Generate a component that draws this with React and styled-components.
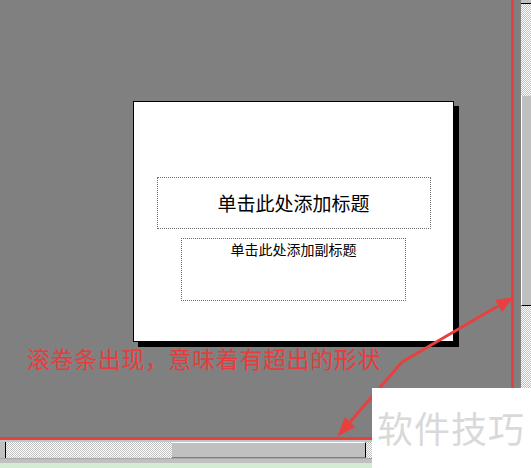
import React from "react";
import styled, { createGlobalStyle } from "styled-components";

const GlobalStyle = createGlobalStyle`
  html, body {
    margin: 0;
    padding: 0;
    overflow: hidden;
    background: #ffffff;
  }
`;

const checker = `
  background-color: #c0c0c0;
  background-image: repeating-conic-gradient(#ffffff 0 25%, #c0c0c0 0 50%);
  background-size: 2px 2px;
`;

const Window = styled.div`
  position: relative;
  width: 531px;
  height: 468px;
  display: flex;
  flex-direction: column;
  background: #c0c0c0;
  overflow: hidden;
  font-family: "Noto Sans CJK SC", "Noto Sans", sans-serif;
`;

const MainRow = styled.div`
  display: flex;
  height: 440px;
`;

const Canvas = styled.div`
  flex: 1;
  background: #808080;
  padding: 101px 0 0 133px;
  box-sizing: border-box;
`;

const Slide = styled.div`
  width: 321px;
  height: 241px;
  box-sizing: border-box;
  background: #ffffff;
  border: 1px solid #000000;
  box-shadow: 5px 5px 0 #000000;
  display: flex;
  flex-direction: column;
  align-items: center;
  padding-top: 75px;
  gap: 9px;
`;

const Placeholder = styled.div`
  box-sizing: border-box;
  width: ${(p) => p.$w}px;
  height: ${(p) => p.$h}px;
  border: 1px dotted #707070;
  display: flex;
  justify-content: center;
  align-items: ${(p) => (p.$top ? "flex-start" : "center")};
  padding-top: ${(p) => (p.$top ? "2px" : "0")};
  color: #000000;
  font-size: ${(p) => p.$size}px;
  line-height: 1.15;
`;

const VScroll = styled.div`
  width: 10px;
  display: flex;
  flex-direction: column;
  border-left: 7px solid #808080;
`;

const VButton = styled.div`
  height: 3px;
  background: #c0c0c0;
  border-bottom: 1px solid #000000;
`;

const Track = styled.div`
  ${checker}
  flex: ${(p) => (p.$size ? `0 0 ${p.$size}px` : "1")};
`;

const VThumb = styled.div`
  height: 209px;
  background: #c0c0c0;
  border-left: 1px solid #ffffff;
  border-bottom: 1px solid #000000;
`;

const HScroll = styled.div`
  display: flex;
  height: 16px;
  border-top: 2px solid #c4c4c4;
`;

const HButton = styled.div`
  width: 5px;
  background: #c0c0c0;
  border-right: 1px solid #000000;
`;

const HThumb = styled.div`
  width: 193px;
  background: #c0c0c0;
  border-top: 1px solid #ffffff;
  border-right: 1px solid #000000;
  border-bottom: 1px solid #808080;
`;

const StatusGap = styled.div`
  height: 4px;
  background: #c0c0c0;
  border-top: 1px solid #a8a8a8;
`;

const StatusBar = styled.div`
  flex: 1;
  background: #d3ecd3;
`;

const Overlay = styled.svg`
  position: absolute;
  left: 0;
  top: 0;
  width: 531px;
  height: 468px;
  pointer-events: none;
`;

const Note = styled.div`
  position: absolute;
  left: 27px;
  top: 347px;
  color: #e83c3c;
  font-size: 23px;
  line-height: 1;
  letter-spacing: 0.6px;
  white-space: nowrap;
`;

const Watermark = styled.div`
  position: absolute;
  left: 372px;
  top: 388px;
  right: 0;
  bottom: 0;
  background: #ffffff;
  color: #d9d9d9;
  font-size: 36px;
  line-height: 1;
  letter-spacing: 1px;
  padding: 21px 0 0 5px;
  box-sizing: border-box;
  white-space: nowrap;
`;

const RED = "#e8403f";

export default function App() {
  return (
    <>
      <GlobalStyle />
      <Window>
        <MainRow>
          <Canvas>
            <Slide>
              <Placeholder $w={274} $h={52} $size={19}>
                单击此处添加标题
              </Placeholder>
              <Placeholder $w={225} $h={63} $size={14} $top>
                单击此处添加副标题
              </Placeholder>
            </Slide>
          </Canvas>
          <VScroll>
            <VButton />
            <Track $size={92} />
            <VThumb />
            <Track />
          </VScroll>
        </MainRow>
        <HScroll>
          <HButton />
          <Track $size={166} />
          <HThumb />
          <Track />
        </HScroll>
        <StatusGap />
        <StatusBar />

        <Overlay viewBox="0 0 531 468">
          <rect x="511" y="0" width="3" height="440" fill={RED} />
          <rect x="0" y="437" width="514" height="3" fill={RED} />
          <line x1="402" y1="362" x2="498" y2="306" stroke={RED} strokeWidth="3" />
          <polygon points="514,297 502,312 495,300" fill={RED} />
          <line x1="402" y1="362" x2="350" y2="422" stroke={RED} strokeWidth="3" />
          <polygon points="337,437 345,417 355,427" fill={RED} />
        </Overlay>
        <Note>滚卷条出现，意味着有超出的形状</Note>
        <Watermark>软件技巧</Watermark>
      </Window>
    </>
  );
}
